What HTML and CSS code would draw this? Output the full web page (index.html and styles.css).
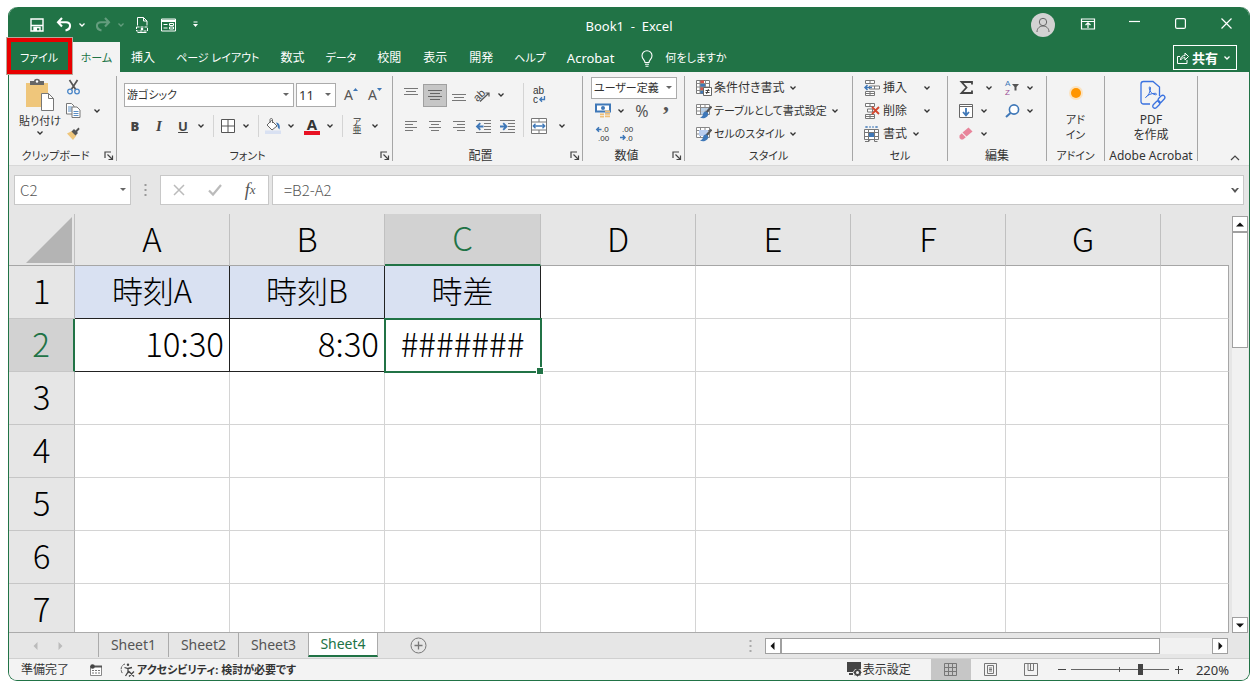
FILE: index.html
```html
<!DOCTYPE html>
<html lang="ja">
<head>
    <meta charset="UTF-8">
    <meta name="viewport" content="width=device-width, initial-scale=1.0">
    <title>Book1 - Excel</title>
    <link rel="stylesheet" href="styles.css">
</head>
<body>
    <!-- Shared symbols -->
    <svg class="defs" aria-hidden="true">
        <symbol id="chev" viewBox="0 0 8 6"><path d="M1.5 1.5 4 4l2.5-2.5" fill="none" stroke="currentColor" stroke-width="1.3"/></symbol>
        <symbol id="launch" viewBox="0 0 10 10"><path d="M1 7V1h6M3.5 3.5 8 8M8.500 4.500v4h-4" fill="none" stroke="#444" stroke-width="1.2"/></symbol>
        <symbol id="brushgrid" viewBox="0 0 16 16">
            <path d="M.5 1.500h13v10H.5zM.5 4.500h13M.5 8h13M4.500 1.500v10M9 1.500v10" fill="#fff" stroke="#888"/>
        </symbol>
        <symbol id="brush" viewBox="0 0 16 16">
            <path d="M15.500 3.500 10 10" stroke="#555" stroke-width="2.200"/>
            <path d="M10.500 8.500c-2-.5-3.500 1-3.500 3-.3 1.700-1.500 2.500-3 3 3 1.500 8 .8 8.300-4z" fill="#3f78b8"/>
        </symbol>
    </svg>

    <div class="window">
        <header class="titlebar">
            <div class="quick">
                <button class="qbtn" aria-label="上書き保存"><svg width="14" height="14" viewBox="0 0 14 14"><path d="M1 1h12v12H1z" fill="none" stroke="#fff" stroke-width="1.400"/><path d="M1 7.500h12M4 13V9.500h6V13" fill="none" stroke="#fff" stroke-width="1.400"/><path d="M4 10h3v3H4z" fill="#fff"/></svg></button>
                <button class="qbtn" aria-label="元に戻す"><svg width="16" height="15" viewBox="0 0 16 15"><path d="M6 1 2 5.200l4 4.300M2.500 5.200H10c5.500 0 5.500 7-.5 8.300" fill="none" stroke="#fff" stroke-width="2.100"/></svg></button>
                <svg class="chev"><use href="#chev"/></svg>
                <button class="qbtn dim" aria-label="やり直し"><svg width="16" height="15" viewBox="0 0 16 15"><path d="M10 1l4 4.200-4 4.300M13.500 5.200H6c-5.500 0-5.500 7 .5 8.300" fill="none" stroke="#fff" stroke-width="2.100"/></svg></button>
                <svg class="chev dim"><use href="#chev"/></svg>
                <button class="qbtn" aria-label="印刷プレビュー"><svg width="14" height="16" viewBox="0 0 14 16"><path d="M2.500 8.500v-8h6l3.500 3.500v4.500M8.500.5V4H12" fill="none" stroke="#fff"/><path d="M1.500 10h11v4h-11z" fill="none" stroke="#fff" stroke-dasharray="3 1"/><circle cx="7" cy="12" r="1.300" fill="#fff"/><path d="M2.500 15.500h9" stroke="#fff"/></svg></button>
                <button class="qbtn" aria-label="フォーム"><svg width="15" height="14" viewBox="0 0 15 14"><path d="M.5 1h14v12H.5zM.5 3.500h14" fill="none" stroke="#fff"/><path d="M.5 2.500h14" stroke="#fff" stroke-width="1.500"/><path d="M2.500 6.500h4M2.500 10h4M8.500 5.500h4v2h-4zM8.500 9h4v2h-4z" fill="none" stroke="#fff"/></svg></button>
                <button class="qbtn" aria-label="カスタマイズ"><svg width="7" height="7" viewBox="0 0 7 7"><path d="M1.500 1h4" stroke="#fff"/><path d="M1 3h5L3.500 6z" fill="#fff"/></svg></button>
            </div>
            <div class="doc-title">Book1&nbsp; -&nbsp; Excel</div>
            <div class="win-controls">
                <button class="avatar" aria-label="アカウント"><svg width="16" height="16" viewBox="0 0 16 16"><circle cx="8" cy="5" r="3.700" fill="none" stroke="#666"/><path d="M2 15c0-8 12-8 12 0" fill="none" stroke="#666"/></svg></button>
                <button class="winbtn" aria-label="リボンの表示オプション"><svg width="14" height="12" viewBox="0 0 14 12"><path d="M.5 1h13v10H.5zM.5 3.500h13M7 10V5M4.500 7 7 4.700 9.500 7" fill="none" stroke="#fff" stroke-width="1.200"/></svg></button>
                <button class="winbtn" aria-label="最小化"><svg width="11" height="11" viewBox="0 0 11 11"><path d="M0 3.500h11" stroke="#fff" stroke-width="1.200"/></svg></button>
                <button class="winbtn" aria-label="最大化"><svg width="11" height="11" viewBox="0 0 11 11"><rect x=".6" y=".6" width="9.800" height="9.800" rx="1.500" fill="none" stroke="#fff" stroke-width="1.200"/></svg></button>
                <button class="winbtn" aria-label="閉じる"><svg width="11" height="11" viewBox="0 0 11 11"><path d="m.5.5 10 10M10.500.5l-10 10" stroke="#fff" stroke-width="1.200"/></svg></button>
            </div>
        </header>

        <nav class="tabs">
            <button class="tab kana file">ファイル</button>
            <button class="tab kana active">ホーム</button>
            <button class="tab">挿入</button>
            <button class="tab kana">ページ レイアウト</button>
            <button class="tab">数式</button>
            <button class="tab kana">データ</button>
            <button class="tab">校閲</button>
            <button class="tab">表示</button>
            <button class="tab">開発</button>
            <button class="tab kana">ヘルプ</button>
            <button class="tab latin">Acrobat</button>
            <button class="tab kana tell"><svg width="12" height="17" viewBox="0 0 12 17"><path d="M4 12.500c0-2.500-3-3.500-3-6.800a5 5 0 0 1 10 0c0 3.300-3 4.300-3 6.800zM4 14.300h4M4.500 16.200h3" fill="none" stroke="#fff" stroke-width="1.100"/></svg>何をしますか</button>
            <button class="share"><svg width="12" height="12" viewBox="0 0 12 12"><path d="M3 4.500H.5v7h9.500V8M3.500 8c0-3 2-4.500 4.500-4.500V1l3.500 3.500L8 8V5.700C6 5.500 4.500 6.500 3.500 8z" fill="none" stroke="#fff"/></svg>共有<svg class="chev"><use href="#chev"/></svg></button>
        </nav>

        <div class="ribbon">
            <section class="group clipboard">
                <div class="tools">
                    <button class="big"><svg width="28" height="32" viewBox="0 0 28 32"><path d="M0 4h22v24H0z" fill="#efc67b"/><path d="M4 6V2h4c0-3 6-3 6 0h4v4z" fill="#666"/><circle cx="11" cy="2.500" r="1.200" fill="#fff"/><path d="M15.500 14.500h7l5 5v12h-12z" fill="#fff" stroke="#777"/><path d="M22.500 14.500v5h5" fill="none" stroke="#777"/></svg><span class="kana">貼り付け</span><svg class="chev"><use href="#chev"/></svg></button>
                    <div class="stack">
                        <div class="row"><button class="icon" aria-label="切り取り"><svg width="13" height="15" viewBox="0 0 13 15"><path d="M2.500 0 9 10M10.500 0 4 10" stroke="#555" stroke-width="1.700"/><circle cx="3" cy="11.500" r="2.300" fill="none" stroke="#4a86c8" stroke-width="1.300"/><circle cx="10" cy="11.500" r="2.300" fill="none" stroke="#4a86c8" stroke-width="1.300"/></svg></button></div>
                        <div class="row"><button class="icon" aria-label="コピー"><svg width="15" height="15" viewBox="0 0 15 15"><path d="M.5.5h5L8 3v8H.5z" fill="#fff" stroke="#777"/><path d="M2 4h4M2 6h4M2 8h4" stroke="#5b8ec4"/><path d="M6 4h5l3 3v7.500H6z" fill="#fff" stroke="#777"/><path d="M7.500 8.500h5M7.500 10.500h5M7.500 12.500h5" stroke="#5b8ec4"/></svg></button><svg class="chev"><use href="#chev"/></svg></div>
                        <div class="row"><button class="icon" aria-label="書式のコピー"><svg width="14" height="13" viewBox="0 0 14 13"><path d="M1 6.500 6 4l4.500 4.500L7 13z" fill="#efc67b"/><path d="M5.500 4.500 8 2l4 4-2.500 2.500zM9.500 3.500 12.500.5l1.200 1.500-2.700 3z" fill="#555"/></svg></button></div>
                    </div>
                </div>
                <div class="caption"><h2 class="kana">クリップボード</h2><button class="launcher" aria-label="クリップボードの設定"><svg width="10" height="10"><use href="#launch"/></svg></button></div>
            </section>

            <section class="group font">
                <div class="tools two">
                    <div class="row pickers">
                        <select class="combo kana font-name" aria-label="フォント"><option>游ゴシック</option></select>
                        <select class="combo font-size" aria-label="フォント サイズ"><option>11</option></select>
                        <button class="icon" aria-label="フォント サイズの拡大"><span class="aa">A</span><svg width="5" height="14" viewBox="0 0 5 14"><path d="M0 3h5L2.500 0z" fill="#3f78b8"/></svg></button>
                        <button class="icon" aria-label="フォント サイズの縮小"><span class="aa">A</span><svg width="5" height="14" viewBox="0 0 5 14"><path d="M0 0h5L2.500 3z" fill="#3f78b8"/></svg></button>
                    </div>
                    <div class="row">
                        <button class="icon letter"><b>B</b></button>
                        <button class="icon letter italic"><i>I</i></button>
                        <button class="icon letter"><u>U</u></button>
                        <svg class="chev"><use href="#chev"/></svg>
                        <span class="sep"></span>
                        <button class="icon" aria-label="罫線"><svg width="14" height="14" viewBox="0 0 14 14"><path d="M.5.5h13v13H.5zM7 .5v13M.5 7h13" fill="#fff" stroke="#555"/></svg></button>
                        <svg class="chev"><use href="#chev"/></svg>
                        <span class="sep"></span>
                        <button class="icon" aria-label="塗りつぶしの色"><svg width="16" height="16" viewBox="0 0 16 16"><path d="M0 12.500h16V16H0z" fill="#d9e1f2"/><path d="M6.500 2.500 12 8l-5 4-5-5z" fill="#fff" stroke="#666"/><path d="M5 5V1.500c0-1.300 2.500-1.300 2.500 0V5" fill="none" stroke="#666"/><path d="M11 4.500c3 0 4.500 3 3.500 7-1-1-1.800-2-2-4z" fill="#3f78b8"/></svg></button>
                        <svg class="chev"><use href="#chev"/></svg>
                        <button class="icon font-color" aria-label="フォントの色"><span>A</span></button>
                        <svg class="chev"><use href="#chev"/></svg>
                        <span class="sep"></span>
                        <button class="icon ruby"><span>ア</span><span>亜</span></button>
                        <svg class="chev"><use href="#chev"/></svg>
                    </div>
                </div>
                <div class="caption"><h2 class="kana">フォント</h2><button class="launcher" aria-label="フォントの設定"><svg width="10" height="10"><use href="#launch"/></svg></button></div>
            </section>

            <section class="group align">
                <div class="tools">
                    <div class="two">
                        <div class="row">
                            <button class="icon" aria-label="上揃え"><svg width="14" height="14" viewBox="0 0 14 14"><path d="M0 .5h14M2 3.500h10M0 6.500h14" stroke="#777"/></svg></button>
                            <button class="icon pressed" aria-label="上下中央揃え"><svg width="14" height="14" viewBox="0 0 14 14"><path d="M0 2.500h14M2 5.500h10M0 8.500h14M2 11.500h10" stroke="#666"/></svg></button>
                            <button class="icon" aria-label="下揃え"><svg width="14" height="14" viewBox="0 0 14 14"><path d="M0 6.500h14M2 9.500h10M0 12.500h14" stroke="#777"/></svg></button>
                            <button class="icon" aria-label="方向"><svg width="16" height="15" viewBox="0 0 16 15"><text x="-1" y="10" font-size="11" transform="rotate(-45 6 8)" fill="#444">ab</text><path d="M5 13.500 14 5M10.500 5H14v3.500" fill="none" stroke="#555" stroke-width="1.200"/></svg></button>
                            <svg class="chev"><use href="#chev"/></svg>
                        </div>
                        <div class="row">
                            <button class="icon" aria-label="左揃え"><svg width="12" height="10" viewBox="0 0 12 10"><path d="M0 .5h12M0 3.500h8M0 6.500h12M0 9.500h8" stroke="#777"/></svg></button>
                            <button class="icon" aria-label="中央揃え"><svg width="12" height="10" viewBox="0 0 12 10"><path d="M0 .5h12M2 3.500h8M0 6.500h12M2 9.500h8" stroke="#777"/></svg></button>
                            <button class="icon" aria-label="右揃え"><svg width="12" height="10" viewBox="0 0 12 10"><path d="M0 .5h12M4 3.500h8M0 6.500h12M4 9.500h8" stroke="#777"/></svg></button>
                            <button class="icon" aria-label="インデントを減らす"><svg width="15" height="13" viewBox="0 0 15 13"><path d="M0 .5h15M8 3.500h7M8 6.500h7M8 9.500h7M0 12.500h15" stroke="#777"/><path d="M7.500 6.500H1.500M4.300 3.200 1 6.500l3.300 3.300" fill="none" stroke="#3f78b8" stroke-width="1.800"/></svg></button>
                            <button class="icon" aria-label="インデントを増やす"><svg width="15" height="13" viewBox="0 0 15 13"><path d="M0 .5h15M8 3.500h7M8 6.500h7M8 9.500h7M0 12.500h15" stroke="#777"/><path d="M0 6.500h6M3.200 3.200l3.300 3.300-3.300 3.300" fill="none" stroke="#3f78b8" stroke-width="1.800"/></svg></button>
                        </div>
                    </div>
                    <span class="sep tall"></span>
                    <div class="two">
                        <div class="row"><button class="icon" aria-label="折り返して全体を表示する"><svg width="14" height="15" viewBox="0 0 14 15"><text x="1" y="6" font-size="10" fill="#333">ab</text><text x="1" y="15" font-size="10" fill="#333">c</text><path d="M12.500 8v3.500H8M10 9.200 7.800 11.500l2.200 2.200" fill="none" stroke="#3f78b8" stroke-width="1.300"/></svg></button></div>
                        <div class="row spaced"><button class="icon" aria-label="セルを結合して中央揃え"><svg width="16" height="16" viewBox="0 0 16 16"><path d="M.5.5h15v15H.5zM.5 4h15M.5 12h15M8 .5V4M8 12v3.500" fill="#fff" stroke="#777"/><path d="M2 8h12M4.500 5.700 2.200 8l2.300 2.300M11.500 5.700 13.800 8l-2.300 2.300" fill="none" stroke="#3f78b8" stroke-width="1.300"/></svg></button><svg class="chev"><use href="#chev"/></svg></div>
                    </div>
                </div>
                <div class="caption"><h2>配置</h2><button class="launcher" aria-label="配置の設定"><svg width="10" height="10"><use href="#launch"/></svg></button></div>
            </section>

            <section class="group number">
                <div class="tools three">
                    <div class="row"><select class="combo kana format" aria-label="表示形式"><option>ユーザー定義</option></select></div>
                    <div class="row">
                        <button class="icon" aria-label="通貨表示形式"><svg width="16" height="16" viewBox="0 0 16 16"><path d="M1 1.500h14v7H1z" fill="#fff" stroke="#3f78b8" stroke-width="2"/><circle cx="8" cy="5" r="2" fill="#3f78b8"/><path d="M10 7.500h5v1.800h-5zM10 10h5v1.800h-5zM10 12.500h5v1.800h-5zM5 10.500h4v1.600H5zM5 12.800h4v1.600H5z" fill="#efbf78"/></svg></button>
                        <svg class="chev"><use href="#chev"/></svg>
                        <button class="icon percent">%</button>
                        <button class="icon comma">,</button>
                    </div>
                    <div class="row">
                        <button class="icon" aria-label="小数点以下の表示桁数を増やす"><svg width="14" height="15" viewBox="0 0 14 15"><text x="6" y="6" font-size="8" fill="#333">.0</text><text x="2" y="15" font-size="8" fill="#333">.00</text><path d="M5.500 3.500H1M3 1.300.8 3.500 3 5.700" fill="none" stroke="#3f78b8" stroke-width="1.500"/></svg></button>
                        <button class="icon" aria-label="小数点以下の表示桁数を減らす"><svg width="14" height="15" viewBox="0 0 14 15"><text x="2" y="6" font-size="8" fill="#333">.00</text><text x="6" y="15" font-size="8" fill="#333">.0</text><path d="M0 11.500h4.500M2.800 9.300 5 11.500l-2.200 2.200" fill="none" stroke="#3f78b8" stroke-width="1.500"/></svg></button>
                    </div>
                </div>
                <div class="caption"><h2>数値</h2><button class="launcher" aria-label="数値の設定"><svg width="10" height="10"><use href="#launch"/></svg></button></div>
            </section>

            <section class="group styles">
                <div class="tools three">
                    <button class="row cmd"><svg width="16" height="16" viewBox="0 0 16 16"><path d="M.5.5h13v13H.5z" fill="#fff" stroke="#777"/><path d="M4 .5h4v3H4zM4 7h4v3.500H4z" fill="#d9534a"/><path d="M4 3.500h5V7H4zM4 10.500h4v3H4z" fill="#3f78b8"/><path d="M.5 3.500h13M.5 7h13M.5 10.500h13M4 .5v13M9.500.5v13" stroke="#888" fill="none"/><path d="M7.500 7.500h8v8h-8z" fill="#fff" stroke="#666"/><path d="M9.500 10.500h4M9.500 12.500h4M12.500 9l-2 5" stroke="#444" fill="none"/></svg>条件付き書式<svg class="chev"><use href="#chev"/></svg></button>
                    <button class="row cmd kana"><svg width="16" height="16" viewBox="0 0 16 16"><use href="#brushgrid"/><path d="M5 5h4v3H5zM9.500 5h4v3h-4zM5 8.500h4v3H5z" fill="#b7cfe8"/><use href="#brush"/></svg>テーブルとして書式設定<svg class="chev"><use href="#chev"/></svg></button>
                    <button class="row cmd kana"><svg width="16" height="16" viewBox="0 0 16 16"><use href="#brushgrid"/><path d="M3 4h9v6H3z" fill="#b9cdee"/><use href="#brush"/></svg>セルのスタイル<svg class="chev"><use href="#chev"/></svg></button>
                </div>
                <div class="caption"><h2 class="kana">スタイル</h2></div>
            </section>

            <section class="group cells">
                <div class="tools three">
                    <button class="row cmd wide"><svg width="16" height="16" viewBox="0 0 16 16"><path d="M1.500.5h9v3h-9zM1.500 11.500h9v4h-9zM6 .5v3M6 11.500v4M1.500 13.500h9M5.500 6h10v3h-10zM10.500 6v3" fill="#fff" stroke="#777"/><path d="M8 7.500H1M3.500 5 1 7.500 3.500 10" fill="none" stroke="#3f78b8" stroke-width="1.500"/></svg><span>挿入</span><svg class="chev"><use href="#chev"/></svg></button>
                    <button class="row cmd wide"><svg width="16" height="16" viewBox="0 0 16 16"><path d="M1.500.5h9v3h-9zM1.500 11.500h9v4h-9zM6 .5v3M6 11.500v4M1.500 13.500h9M3.500 6h5v3h-5z" fill="#fff" stroke="#777"/><path d="m8 4 7 7M15 4l-7 7" stroke="#d2472f" stroke-width="1.800"/></svg><span>削除</span><svg class="chev"><use href="#chev"/></svg></button>
                    <button class="row cmd"><svg width="16" height="16" viewBox="0 0 16 16"><path d="M.5 3.500h14v10H.5zM.5 6.500h14M.5 10.500h14M4.500 3.500v12M10.500 3.500v12M1 15.500h4l1-1.500M10.500 15.500h3" fill="#fff" stroke="#777"/><path d="M5 7h5v4H5z" fill="#3f78b8"/><path d="M2 1h11M2 0v2M13 0v2" stroke="#3f78b8" stroke-dasharray="2 1"/></svg><span>書式</span><svg class="chev"><use href="#chev"/></svg></button>
                </div>
                <div class="caption"><h2 class="kana">セル</h2></div>
            </section>

            <section class="group edit">
                <div class="tools">
                    <div class="three">
                        <div class="row spaced"><button class="icon" aria-label="合計"><svg width="13" height="13" viewBox="0 0 13 13"><path d="M12 3.500V1H1.500l5 5.500-5 5.500H12V9.500" fill="none" stroke="#444" stroke-width="1.800"/></svg></button><svg class="chev"><use href="#chev"/></svg></div>
                        <div class="row"><button class="icon" aria-label="フィル"><svg width="14" height="14" viewBox="0 0 14 14"><path d="M.5.5h13v13H.5z" fill="#fff" stroke="#666"/><path d="M.5 2.500h13" stroke="#666"/><path d="M7 4v7M4 8l3 3.300L10 8" fill="none" stroke="#3f78b8" stroke-width="1.800"/></svg></button><svg class="chev"><use href="#chev"/></svg></div>
                        <div class="row"><button class="icon" aria-label="クリア"><svg width="14" height="13" viewBox="0 0 14 13"><path d="m9.500.5 4 4-6 5-4-4z" fill="#e8849a"/><path d="m2.800 6.200 4 4L4 12.500H2L.5 11V8.500z" fill="#e8849a"/></svg></button><svg class="chev"><use href="#chev"/></svg></div>
                    </div>
                    <div class="three">
                        <div class="row"><button class="icon" aria-label="並べ替えとフィルター"><svg width="14" height="14" viewBox="0 0 14 14"><text x="0" y="5" font-size="8" fill="#3f78b8">A</text><text x="0" y="14" font-size="8" fill="#9b4f96">Z</text><path d="M7 3h7l-2.500 3v3.500h-2V6z" fill="#555"/></svg></button><svg class="chev"><use href="#chev"/></svg></div>
                        <div class="row"><button class="icon" aria-label="検索と選択"><svg width="15" height="14" viewBox="0 0 15 14"><circle cx="9" cy="5.500" r="4.600" fill="#fff" stroke="#3f78b8" stroke-width="1.600"/><path d="M5.500 9 1 13" stroke="#3f78b8" stroke-width="2"/></svg></button><svg class="chev"><use href="#chev"/></svg></div>
                    </div>
                </div>
                <div class="caption"><h2>編集</h2></div>
            </section>

            <section class="group addin">
                <div class="tools">
                    <button class="big"><svg width="32" height="32" viewBox="0 0 32 32"><circle cx="16" cy="15" r="7" fill="#fbe3c0"/><circle cx="16" cy="15" r="5" fill="#ff9500"/></svg><span class="kana">アド<br>イン</span></button>
                </div>
                <div class="caption"><h2 class="kana">アドイン</h2></div>
            </section>

            <section class="group acrobat">
                <div class="tools">
                    <button class="big"><svg width="28" height="32" viewBox="0 0 28 32"><path d="M13 26H6.500A2.500 2.500 0 0 1 4 23.500V6a2.500 2.500 0 0 1 2.500-2.500H16L22.500 9v9" fill="none" stroke="#3a72e0" stroke-width="1.300"/><path d="M8.500 19.500c3-1.500 5-6.500 5-9.500 0-1.500-1.500-1.500-1.300 0 .3 3.500 3 6.500 6.500 6.800 1.500 0 1-1.600-.7-1.500-3.500.2-7 1.200-9.500 4.200z" fill="none" stroke="#3a72e0"/><path d="m18 25 1.500-1.500c2-2 5 .5 3 3l-3 3c-2.200 2-5.200-.7-3-3zM22 24.500c-2-2-1-3.500.5-5l1.500-1.500c2.500-2 5.200.6 3.200 3l-3 3.200c-.8.8-1.700.8-2.200.3z" fill="#f3f3f3" stroke="#3a72e0" stroke-width="1.300"/></svg><span>PDF<br>を作成</span></button>
                </div>
                <div class="caption"><h2>Adobe Acrobat</h2></div>
            </section>

            <button class="collapse" aria-label="リボンを折りたたむ"><svg width="10" height="6" viewBox="0 0 10 6"><path d="m1 5 4-4 4 4" fill="none" stroke="#444" stroke-width="1.200"/></svg></button>
        </div>

        <div class="formula-bar">
            <select class="combo name-box" aria-label="名前ボックス"><option>C2</option></select>
            <svg class="grip" width="3" height="12" viewBox="0 0 3 12"><path d="M.5 1h2M.5 6h2M.5 11h2" stroke="#999" stroke-width="2"/></svg>
            <div class="entry">
                <button aria-label="キャンセル"><svg width="12" height="12" viewBox="0 0 12 12"><path d="m1 1 10 10M11 1 1 11" stroke="#bbb" stroke-width="1.500"/></svg></button>
                <button aria-label="入力"><svg width="14" height="12" viewBox="0 0 14 12"><path d="m1 6.500 4 4L13 1" fill="none" stroke="#bbb" stroke-width="2.200"/></svg></button>
                <button class="fx" aria-label="関数の挿入">f<small>x</small></button>
            </div>
            <div class="formula">
                <input type="text" value="=B2-A2" aria-label="数式バー">
                <button aria-label="数式バーの展開"><svg width="8" height="5" viewBox="0 0 8 5"><path d="M0 0h2l2 2 2-2h2L4 5z" fill="#555"/></svg></button>
            </div>
        </div>

        <main class="sheet">
            <div class="grid">
                <table>
                    <thead>
                        <tr><th class="corner"><svg width="46" height="46" viewBox="0 0 46 46"><path d="M46 0v46H0z" fill="#b4b4b4"/></svg></th><th>A</th><th>B</th><th class="current">C</th><th>D</th><th>E</th><th>F</th><th>G</th><th class="rest"></th></tr>
                    </thead>
                    <tbody>
                        <tr><th>1</th><td class="head">時刻A</td><td class="head">時刻B</td><td class="head">時差</td><td></td><td></td><td></td><td></td><td></td></tr>
                        <tr><th class="current">2</th><td class="value">10:30</td><td class="value">8:30</td><td class="selected">#######</td><td></td><td></td><td></td><td></td><td></td></tr>
                        <tr><th>3</th><td></td><td></td><td></td><td></td><td></td><td></td><td></td><td></td></tr>
                        <tr><th>4</th><td></td><td></td><td></td><td></td><td></td><td></td><td></td><td></td></tr>
                        <tr><th>5</th><td></td><td></td><td></td><td></td><td></td><td></td><td></td><td></td></tr>
                        <tr><th>6</th><td></td><td></td><td></td><td></td><td></td><td></td><td></td><td></td></tr>
                        <tr><th>7</th><td></td><td></td><td></td><td></td><td></td><td></td><td></td><td></td></tr>
                    </tbody>
                </table>
            </div>
            <div class="scroll vertical">
                <button aria-label="上へ"><svg width="8" height="5" viewBox="0 0 8 5"><path d="M0 4.500h8L4 .5z" fill="#111"/></svg></button>
                <div class="track"><div class="thumb"></div></div>
                <button aria-label="下へ"><svg width="8" height="5" viewBox="0 0 8 5"><path d="M0 .5h8l-4 4z" fill="#111"/></svg></button>
            </div>
        </main>

        <div class="sheet-bar">
            <div class="sheet-nav">
                <button aria-label="前のシート"><svg width="5" height="8" viewBox="0 0 5 8"><path d="M4.500 0v8L.5 4z" fill="#bbb"/></svg></button>
                <button aria-label="次のシート"><svg width="5" height="8" viewBox="0 0 5 8"><path d="M.5 0v8l4-4z" fill="#bbb"/></svg></button>
            </div>
            <button class="sheet-tab">Sheet1</button>
            <button class="sheet-tab">Sheet2</button>
            <button class="sheet-tab">Sheet3</button>
            <button class="sheet-tab active">Sheet4</button>
            <button class="add-sheet" aria-label="新しいシート"><svg width="17" height="17" viewBox="0 0 17 17"><circle cx="8.500" cy="8.500" r="7.500" fill="none" stroke="#777"/><path d="M8.500 4.500v8M4.500 8.500h8" stroke="#777" stroke-width="1.300"/></svg></button>
            <svg class="grip" width="3" height="12" viewBox="0 0 3 12"><path d="M.5 1h2M.5 6h2M.5 11h2" stroke="#aaa" stroke-width="2"/></svg>
            <div class="scroll horizontal">
                <button aria-label="左へ"><svg width="5" height="8" viewBox="0 0 5 8"><path d="M4.500 0v8L.5 4z" fill="#111"/></svg></button>
                <div class="track"><div class="thumb"></div></div>
                <button aria-label="右へ"><svg width="5" height="8" viewBox="0 0 5 8"><path d="M.5 0v8l4-4z" fill="#111"/></svg></button>
            </div>
        </div>

        <footer class="status">
            <span class="ready">準備完了</span>
            <button class="macro" aria-label="マクロの記録"><svg width="12" height="12" viewBox="0 0 12 12"><path d="M.5 2.500h11v9H.5z" fill="#fff" stroke="#888"/><path d="M3 2.500h9" stroke="#555" stroke-width="2"/><path d="M2 6.500h8M2 9h8" stroke="#777" stroke-dasharray="2 1"/><circle cx="2.500" cy="2.500" r="2.300" fill="#444"/></svg></button>
            <button class="access kana"><svg width="15" height="14" viewBox="0 0 15 14"><path d="M5 1C1 2 0 7 2.500 10.500" fill="none" stroke="#555" stroke-dasharray="3 1"/><circle cx="8" cy="1.800" r="1.200" fill="#444"/><path d="M4.500 4.500 8 5.500l4-1M8 5.500V9l-2.500 4M8 8l1.500 2M9 8.500l5 5M14 8.500l-5 5" fill="none" stroke="#444" stroke-width="1.300"/></svg>アクセシビリティ: 検討が必要です</button>
            <button class="display"><svg width="15" height="15" viewBox="0 0 15 15"><path d="M0 0h14v7H8l-2 3H0z" fill="#444"/><path d="M2 12h4" stroke="#444" stroke-width="2"/><circle cx="10.500" cy="10.500" r="2.700" fill="none" stroke="#444" stroke-width="1.700"/><path d="M10.500 6.500v8M6.500 10.500h8M7.700 7.700l5.600 5.600M13.300 7.700l-5.600 5.600" stroke="#444"/><circle cx="10.500" cy="10.500" r="1.500" fill="#f3f3f3"/></svg>表示設定</button>
            <div class="views">
                <button class="on" aria-label="標準"><svg width="13" height="13" viewBox="0 0 13 13"><path d="M.5.5h12v12H.5zM.5 4.500h12M.5 8.500h12M4.500.5v12M8.500.5v12" fill="none" stroke="#777"/></svg></button>
                <button aria-label="ページ レイアウト"><svg width="13" height="13" viewBox="0 0 13 13"><path d="M.5.5h12v12H.5zM3.500 2.500h6v8h-6zM5 5h3M5 6.500h3M5 8h3" fill="none" stroke="#777"/></svg></button>
                <button aria-label="改ページ プレビュー"><svg width="14" height="13" viewBox="0 0 14 13"><path d="M.5.5h13v12H.5zM4 .5v7h5.500v-7M6.500.5v7" fill="none" stroke="#777"/></svg></button>
            </div>
            <button class="zoom-step" aria-label="縮小"><svg width="8" height="8" viewBox="0 0 8 8"><path d="M0 3.500h8" stroke="#444"/></svg></button>
            <input class="zoom" type="range" min="0" max="100" value="72" aria-label="ズーム">
            <button class="zoom-step" aria-label="拡大"><svg width="8" height="8" viewBox="0 0 8 8"><path d="M0 3.500h8M3.500 0v8" stroke="#444"/></svg></button>
            <span class="zoom-value">220%</span>
        </footer>
    </div>
</body>
</html>
```
FILE: styles.css
```css
* {
    margin: 0;
    padding: 0;
    box-sizing: border-box;
}

body {
    height: 100vh;
    padding: 7px 9px 8px 8px;
    background: #fff;
    font-family: "Noto Sans", "Noto Sans CJK JP", sans-serif;
    font-size: 12px;
    line-height: 16px;
    font-feature-settings: "palt";
    color: #333;
}

button,
input,
select {
    font: inherit;
    font-feature-settings: inherit;
    color: inherit;
    background: none;
    border: none;
    outline: none;
}

button {
    display: flex;
    align-items: center;
    justify-content: center;
    white-space: nowrap;
    cursor: pointer;
}

svg {
    flex: none;
    display: block;
    overflow: visible;
}

.defs {
    position: absolute;
    width: 0;
    height: 0;
}

.window {
    display: flex;
    flex-direction: column;
    height: 100%;
    border: 1px solid #217346;
    border-top: none;
    border-radius: 9px;
    background: #e6e6e6;
}

.chev {
    width: 8px;
    height: 6px;
    margin: 0 2px;
}

/* Title bar */
.titlebar {
    display: grid;
    grid-template-columns: 1fr auto 1fr;
    align-items: center;
    height: 35px;
    background: #217346;
    color: #fff;
    border-radius: 9px 9px 0 0;
}

.quick {
    display: flex;
    align-items: center;
    padding-left: 14px;
}

.qbtn {
    width: 27px;
    height: 24px;
}

.quick .chev {
    margin: 0 1px;
}

.quick .chev + .qbtn {
    margin-left: 2px;
}

.dim {
    opacity: 0.3;
}

.doc-title {
    padding-top: 3px;
    font-size: 13px;
}

.win-controls {
    display: flex;
    justify-content: flex-end;
    align-items: center;
}

.avatar {
    width: 24px;
    height: 24px;
    margin-right: 10px;
    border-radius: 50%;
    background: #d2d2d2;
}

.winbtn {
    width: 46px;
    height: 30px;
    padding-bottom: 2px;
}

/* Ribbon tabs */
.tabs {
    display: flex;
    height: 30px;
    background: #217346;
    color: #fff;
}

.tab {
    padding: 2px 11px 0;
}

.tab.kana {
    padding: 2px 10px 0;
}

.tab.latin {
    font-size: 13px;
}

.tab.file {
    position: relative;
    width: 60px;
    margin-right: 4px;
}

.tab.file::after {
    content: '';
    position: absolute;
    inset: -4px -3px -2px -2px;
    border: 4px solid #e80000;
    outline: 1px solid #b9a79a;
}

.tab.active {
    width: 47px;
    padding: 2px 0 0;
    background: #f3f3f3;
    color: #217346;
}

.tab.tell {
    gap: 12px;
    margin-left: 6px;
}

.share {
    gap: 3px;
    height: 25px;
    margin: 3px 12px 0 auto;
    padding: 0 3px;
    border: 1px solid #fff;
    font-size: 13px;
    font-weight: bold;
}

/* Labels made mostly of kana are set a size smaller */
.kana {
    font-size: 11px;
}

/* Ribbon */
.ribbon {
    display: flex;
    height: 94px;
    padding: 4px 0;
    background: #f3f3f3;
    border-bottom: 1px solid #d8d8d8;
}

.group {
    display: flex;
    flex-direction: column;
    justify-content: space-between;
    flex: none;
    border-right: 1px solid #a6a6a6;
}

.clipboard { width: 108px; }
.font { width: 276px; }
.align { width: 190px; }
.number { width: 102px; }
.styles { width: 168px; }
.cells { width: 95px; }
.edit { width: 99px; }
.addin { width: 58px; }
.acrobat { width: 93px; }

.tools {
    display: flex;
}

.row {
    display: flex;
    align-items: center;
    height: 23px;
}

.two,
.three,
.stack {
    display: flex;
    flex-direction: column;
}

.two {
    gap: 7px;
    padding-top: 7px;
}

.two .row {
    height: 24px;
}

.icon {
    width: 24px;
    height: 23px;
}

.icon text {
    font-family: "Liberation Sans", sans-serif;
}

.pressed {
    background: #c6c6c6;
    border: 1px solid #a0a0a0;
}

.sep {
    width: 1px;
    height: 22px;
    margin: 0 2px 0 6px;
    background: #d4d4d4;
}

.sep.tall {
    height: 54px;
    margin: 7px 3px 0 4px;
}

.spaced .chev {
    margin-left: 7px;
}

.caption {
    display: flex;
    align-items: center;
    height: 10px;
}

.caption h2 {
    flex: 1;
    font-weight: normal;
    line-height: 14px;
    text-align: center;
    white-space: nowrap;
}

.caption h2:not(.kana) {
    font-size: 12px;
}

.launcher {
    width: 14px;
    height: 14px;
}

.big {
    flex-direction: column;
    justify-content: flex-start;
    padding-top: 3px;
    gap: 2px;
    line-height: 15px;
}

.addin .big,
.acrobat .big {
    flex: 1;
    padding-top: 2px;
}

.clipboard .big {
    width: 52px;
    padding-left: 10px;
}

.clipboard .row .chev {
    margin-left: 8px;
}

.combo {
    appearance: none;
    height: 24px;
    padding: 0 2px;
    border: 1px solid #ababab;
    background: #fff url("data:image/svg+xml,%3Csvg xmlns='http://www.w3.org/2000/svg' width='6' height='4'%3E%3Cpath d='M0 0h6L3 3z' fill='%23666'/%3E%3C/svg%3E") no-repeat right 4px center;
}

.font .tools {
    padding-left: 6px;
}

.pickers {
    padding-left: 1px;
}

.font-name {
    width: 170px;
    margin-right: 2px;
}

.font-size {
    width: 40px;
    margin-right: 3px;
    font-size: 13px;
}

.aa {
    font-size: 14px;
    color: #555;
}

.letter {
    font-size: 13px;
    font-weight: bold;
    color: #444;
}

.italic {
    font-family: "Liberation Serif", serif;
    font-size: 15px;
}

.sep + .icon + .chev + .font-color {
    margin-left: 3px;
}

.font-color span {
    width: 16px;
    border-bottom: 4px solid #e81123;
    font-size: 15px;
    font-weight: bold;
    line-height: 14px;
}

.ruby {
    flex-direction: column;
    font-size: 9px;
    line-height: 8px;
}

.align .tools {
    padding-left: 6px;
}

.align .tools > .two:first-child {
    width: 120px;
}

.number .tools {
    padding-left: 8px;
}

.format {
    width: 86px;
    height: 22px;
}

.percent {
    margin-left: 3px;
    font-size: 16px;
    color: #555;
}

.comma {
    padding-bottom: 18px;
    font-family: "Liberation Serif", serif;
    font-size: 24px;
    font-weight: bold;
    color: #555;
}

.styles .tools,
.cells .tools {
    padding-left: 11px;
    align-items: flex-start;
}

.cmd {
    gap: 2px;
}

.cells .cmd {
    gap: 3px;
}

.cells .wide span {
    margin-right: 11px;
}

.edit .tools {
    padding-left: 6px;
    gap: 4px;
}

.edit .three {
    width: 42px;
}

.collapse {
    align-self: flex-end;
    width: 20px;
    height: 6px;
    margin-left: auto;
    margin-right: 4px;
}

/* Formula bar */
.formula-bar {
    display: flex;
    align-items: center;
    height: 48px;
    padding: 0 5px;
}

.name-box,
.entry,
.formula {
    height: 30px;
    border: 1px solid #c8c8c8;
    background-color: #fff;
    color: #555;
}

.name-box {
    width: 117px;
    padding: 0 5px;
    font-family: "Noto Sans CJK JP", sans-serif;
    font-size: 15px;
    font-weight: 300;
}

.formula-bar .grip {
    margin: 0 13px;
}

.entry {
    display: flex;
    width: 109px;
    margin-right: 3px;
}

.entry button {
    flex: 1;
}

.fx {
    font-family: "Liberation Serif", serif;
    font-size: 18px;
    font-style: italic;
}

.fx small {
    font-size: 13px;
}

.formula {
    display: flex;
    flex: 1;
}

.formula input {
    flex: 1;
    padding-left: 11px;
    font-family: "Noto Sans CJK JP", sans-serif;
    font-size: 15px;
    font-weight: 300;
}

.formula button {
    width: 16px;
}

/* Sheet */
.sheet {
    display: flex;
    flex: 1;
    min-height: 0;
}

.grid {
    flex: 1;
    min-width: 0;
    overflow: hidden;
    border-bottom: 1px solid #ababab;
}

table {
    width: 100%;
    table-layout: fixed;
    border-collapse: separate;
    border-spacing: 0;
    font-family: "Noto Sans CJK JP", sans-serif;
    font-size: 33px;
    font-weight: 300;
    font-feature-settings: normal;
    line-height: 40px;
    color: #000;
}

th,
td {
    height: 53px;
    border-right: 1px solid #d4d4d4;
    border-bottom: 1px solid #d4d4d4;
}

th {
    padding-bottom: 4px;
    font-weight: 300;
    background: #e6e6e6;
}

thead th {
    width: 155px;
    height: 52px;
    border-right: 1px solid #c0c0c0;
    border-bottom: 1px solid #a6a6a6;
}

thead .corner {
    width: 66px;
    padding: 0 2px 0 0;
}

.corner svg {
    margin-left: auto;
}

thead .rest {
    width: auto;
    border-right: none;
}

tbody th {
    border-right-color: #b4b4b4;
    border-bottom-color: #c6c6c6;
}

th.current {
    background: #d2d2d2;
    color: #217346;
}

thead th.current {
    width: 156px;
    border-bottom: 2px solid #217346;
}

tbody th.current {
    border-right: 2px solid #217346;
}

td {
    background: #fff;
    text-align: center;
    padding-bottom: 5px;
}

td:last-child {
    border-right-color: #a6a6a6;
}

.head,
.value {
    border-color: #222;
}

.head {
    background: #d9e1f2;
    font-size: 31px;
}

.value {
    padding-right: 5px;
    text-align: right;
}

.selected {
    position: relative;
}

.selected::before {
    content: '';
    position: absolute;
    inset: -1px -2px -2px -1px;
    border: 2px solid #217346;
}

.selected::after {
    content: '';
    position: absolute;
    right: -4px;
    bottom: -4px;
    width: 6px;
    height: 6px;
    border: 1px solid #fff;
    background: #217346;
}

/* Scroll bars */
.scroll {
    display: flex;
}

.scroll button {
    flex: none;
    width: 16px;
    height: 16px;
    border: 1px solid #a0a0a0;
    background: #fff;
}

.track {
    display: flex;
    flex: 1;
    background: #f1f1f1;
}

.thumb {
    border: 1px solid #a0a0a0;
    background: #fff;
}

.vertical {
    flex-direction: column;
    width: 16px;
    margin: 2px 1px 0 3px;
}

.vertical .track {
    flex-direction: column;
}

.vertical .thumb {
    height: 30%;
}

.horizontal {
    width: 38%;
    height: 16px;
}

.horizontal .thumb {
    width: 88%;
}

/* Sheet tabs */
.sheet-bar {
    display: flex;
    align-items: center;
    height: 26px;
    padding-right: 21px;
    border-bottom: 1px solid #d0d0d0;
}

.sheet-nav {
    display: flex;
    gap: 1px;
    width: 89px;
    padding-left: 14px;
}

.sheet-nav button {
    width: 24px;
    height: 20px;
}

.sheet-tab {
    align-self: flex-start;
    width: 70px;
    height: 24px;
    border-left: 1px solid #ababab;
    font-size: 14px;
    color: #555;
}

.sheet-tab.active {
    background: #fff;
    border-right: 1px solid #ababab;
    border-bottom: 2px solid #217346;
    color: #217346;
}

.add-sheet {
    margin: 0 auto 0 32px;
}

.sheet-bar .grip {
    margin-right: 13px;
}

/* Status bar */
.status {
    display: flex;
    align-items: center;
    height: 21px;
    padding: 0 20px 0 12px;
    background: #f3f3f3;
    border-radius: 0 0 8px 8px;
}

.macro {
    margin: 0 18px 0 21px;
}

.access {
    gap: 2px;
    font-weight: bold;
}

.display {
    gap: 1px;
    margin-left: auto;
    margin-right: 20px;
}

.views {
    display: flex;
    margin-right: 7px;
}

.views button {
    width: 40px;
    height: 21px;
}

.views .on {
    background: #c6c6c6;
}

.zoom-step {
    width: 8px;
    height: 16px;
}

.zoom {
    appearance: none;
    width: 98px;
    height: 11px;
    margin: 0 6px 0 5px;
    background: linear-gradient(#555, #555) 50% 50% / 1px 5px no-repeat, linear-gradient(#666, #666) 0 50% / 100% 1px no-repeat;
}

.zoom::-webkit-slider-thumb {
    appearance: none;
    width: 5px;
    height: 11px;
    background: #444;
}

.zoom-value {
    margin-left: 13px;
    font-size: 13px;
}
```
